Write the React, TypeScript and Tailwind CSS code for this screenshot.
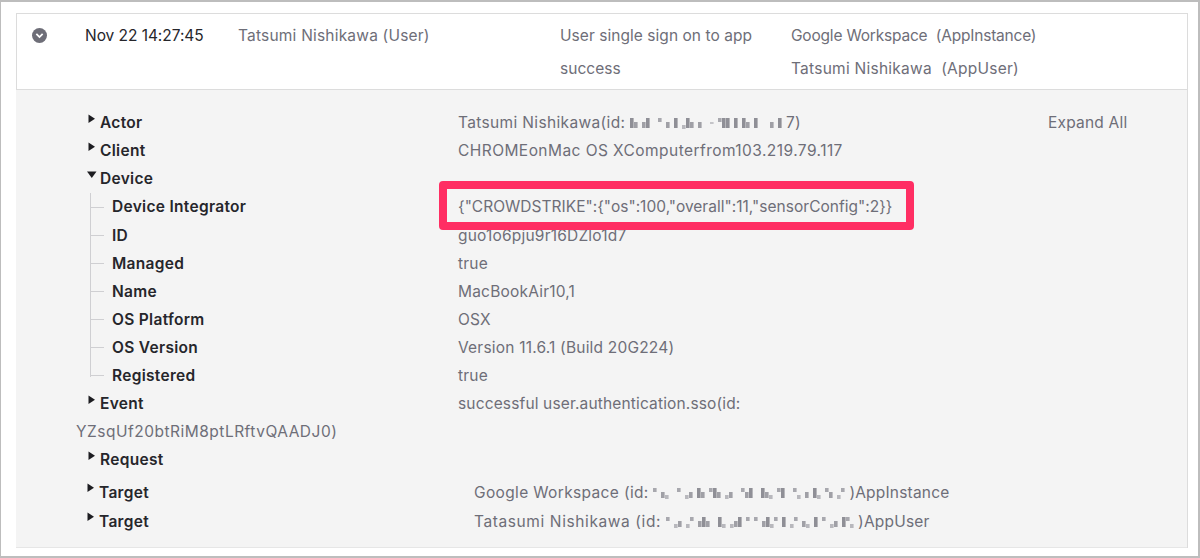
const font = { fontFamily: 'Inter, "Liberation Sans", sans-serif' };

// blurred-out ids in the screenshot, drawn as small smudges
function Smudge({ pattern }: { pattern: string }) {
  const cells = pattern.split('');
  const shape: Record<string, [number, number, string]> = {
    x: [2, 10, '#8f8f96'],
    o: [6, 6, '#a0a0a6'],
    ',': [9, 4, '#b8b8bd'],
    "'": [2, 4, '#a8a8ae'],
    '-': [6, 2, '#c4c4c8'],
  };
  return (
    <svg width={cells.length * 4} height="14" className="inline-block align-[-2px] blur-[0.6px]" aria-hidden="true">
      {cells.map((c, i) =>
        shape[c] ? <rect key={i} x={i * 4} y={shape[c][0]} width="3.6" height={shape[c][1]} fill={shape[c][2]} /> : null,
      )}
    </svg>
  );
}

function Arrow({ open }: { open?: boolean }) {
  return (
    <svg width="10" height="10" viewBox="0 0 10 10" className="-mt-[8px] shrink-0" aria-hidden="true">
      {open ? <path d="M0 1.5h9.5L4.8 8z" fill="#1d1d21" /> : <path d="M1.5 0.5 8 4.8 1.5 9z" fill="#1d1d21" />}
    </svg>
  );
}

function Label({ children }: { children: React.ReactNode }) {
  return <span className="text-[15.5px] font-semibold tracking-[0.3px] text-[#26262b]">{children}</span>;
}

function Row({ label, value, open }: { label: string; value?: React.ReactNode; open?: boolean }) {
  return (
    <div className="flex h-[28.1px] items-center">
      <div className="ml-[71px] flex w-[371px] items-center gap-[3px]">
        <Arrow open={open} />
        <Label>{label}</Label>
      </div>
      <div className="whitespace-nowrap text-[#6e6e78]">{value}</div>
    </div>
  );
}

function Child({ label, value, last }: { label: string; value: React.ReactNode; last?: boolean }) {
  return (
    <div className="flex h-[28.1px] items-center">
      <div className="ml-[74px] flex h-full w-[368px] items-center">
        <div className={`w-px self-start bg-[#cfcfd2] ${last ? 'h-[15px]' : 'h-full'}`} />
        <div className="h-px w-[13px] bg-[#cfcfd2]" />
        <span className="ml-[8px]">
          <Label>{label}</Label>
        </span>
      </div>
      <div className="whitespace-nowrap text-[#6e6e78]">{value}</div>
    </div>
  );
}

function TargetRow({ label, value }: { label: string; value: React.ReactNode }) {
  return (
    <div className="flex h-[29px] items-center">
      <div className="ml-[70px] flex w-[388px] items-center gap-[3px]">
        <Arrow />
        <Label>{label}</Label>
      </div>
      <div className="whitespace-nowrap text-[#6e6e78]">{value}</div>
    </div>
  );
}

export default function App() {
  return (
    <div className="h-[558px] w-[1200px] overflow-hidden bg-white" style={font}>
      <div className="h-[558px] border border-t-2 border-r-2 border-b-2 border-[#bdbdbd] pt-[11px] pr-[10px] pl-[15px] text-[15.5px] tracking-[0.2px]">
        <div className="relative border-x border-t border-[#dcdcdc] bg-white">
          {/* Event row */}
          <div className="flex h-[76px] border-b border-[#dcdcdc] text-[#6e6e78]">
            <div className="flex w-[68px] shrink-0 pt-[14px] pl-[15px]">
              <span className="flex h-[15px] w-[15px] items-center justify-center rounded-full bg-[#6e6e78]">
                <svg width="9" height="9" viewBox="0 0 10 10" fill="none" stroke="#fff" strokeWidth="2" aria-hidden="true">
                  <path d="M1.5 3.2 5 6.7l3.5-3.5" />
                </svg>
              </span>
            </div>
            <div className="w-[153px] shrink-0 pt-[10px] tracking-[-0.05px] text-[#26262b]">Nov 22 14:27:45</div>
            <div className="w-[322px] shrink-0 pt-[10px]">Tatsumi Nishikawa (User)</div>
            <div className="w-[231px] shrink-0 pt-[5px] leading-[33px] tracking-[0.05px]">User single sign on to app success</div>
            <div className="pt-[5px] leading-[33px] whitespace-pre">
              <div className="tracking-[-0.2px]">Google Workspace&nbsp; (AppInstance)</div>
              <div className="tracking-[0.25px]">Tatsumi Nishikawa&nbsp; (AppUser)</div>
            </div>
          </div>

          {/* Expanded details */}
          <div className="relative -ml-px h-[458px] border-b border-[#e6e6e6] bg-[#f4f4f4] pt-[18.75px]">
            <Row
              label="Actor"
              value={
                <span>
                  <span className="tracking-[0.35px]">Tatsumi Nishikawa(id: </span>
                  <Smudge pattern="xo.ox..'.o.x.,xo.o..-.'xx.x.xo.x...o.x." />
                  7)
                </span>
              }
            />
            <Row label="Client" value={<span className="tracking-[0.44px]">CHROMEonMac OS XComputerfrom103.219.79.117</span>} />
            <Row label="Device" open />
            <Child
              label="Device Integrator"
              value={<span className="tracking-[0.02px]">{'{"CROWDSTRIKE":{"os":100,"overall":11,"sensorConfig":2}}'}</span>}
            />
            <Child label="ID" value="guo1o6pju9r16DZlo1d7" />
            <Child label="Managed" value="true" />
            <Child label="Name" value="MacBookAir10,1" />
            <Child label="OS Platform" value="OSX" />
            <Child label="OS Version" value="Version 11.6.1 (Build 20G224)" />
            <Child label="Registered" value="true" last />
            <Row label="Event" value={<span className="tracking-[0.15px]">successful user.authentication.sso(id:</span>} />
            <div className="flex h-[28.1px] items-center pl-[60px] tracking-[0.5px] text-[#6e6e78]">YZsqUf20btRiM8ptLRftvQAADJ0)</div>
            <Row label="Request" />
            <div className="mt-[4px]">
              <TargetRow
                label="Target"
                value={
                  <span>
                    <span className="tracking-[0.35px]">Google Workspace (id: </span>
                    <Smudge pattern="'.o,..'.,o.xo.'xo.,o..'ox..xo,.'x..',.o.x,.'o.,'." />
                    )AppInstance
                  </span>
                }
              />
              <TargetRow
                label="Target"
                value={
                  <span>
                    <span className="tracking-[0.6px]">Tatasumi Nishikawa (id: </span>
                    <Smudge pattern="'.,o.,'.oxo..x,.,ox.'.'.ox,'.x.,'.o,.x.'.,o.x',." />
                    )AppUser
                  </span>
                }
              />
            </div>
            <span className="absolute top-[20.75px] left-[1032px] text-[#6e6e78]">Expand All</span>
          </div>

          {/* Red highlight drawn over the screenshot */}
          <div className="pointer-events-none absolute top-[167px] left-[422px] h-[49px] w-[475px] rounded-[4px] border-[8px] border-[#ff2e63]" />
        </div>
      </div>
    </div>
  );
}
